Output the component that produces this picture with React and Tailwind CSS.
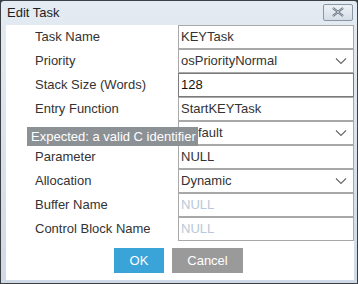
import React from "react";

const Chevron = () => (
  <svg width="12" height="8" viewBox="0 0 12 8" className="mr-[6px]">
    <path d="M1 1.5 L6 6.5 L11 1.5" fill="none" stroke="#666" strokeWidth="1.1" />
  </svg>
);

const rows = [
  { label: "Task Name", value: "KEYTask" },
  { label: "Priority", value: "osPriorityNormal", select: true },
  { label: "Stack Size (Words)", value: "128", focus: true },
  { label: "Entry Function", value: "StartKEYTask" },
  { label: "", value: "fault", select: true, hidden: true },
  { label: "Parameter", value: "NULL" },
  { label: "Allocation", value: "Dynamic", select: true },
  { label: "Buffer Name", value: "NULL", placeholder: true },
  { label: "Control Block Name", value: "NULL", placeholder: true },
];

export default function App() {
  return (
    <div
      className="relative w-[358px] h-[284px] bg-[#3c3f44] p-px overflow-hidden"
      style={{ fontFamily: '"Liberation Sans", Arial, sans-serif' }}
    >
      <div className="flex flex-col w-full h-full bg-gradient-to-b from-[#e4ebf2] to-[#cfdae6] rounded-t-[3px]">
        <div className="flex items-center justify-between h-[24px] pl-[6px] pr-[4px]">
          <span className="text-[13px] text-[#1e1e1e]">Edit Task</span>
          <div className="flex items-center justify-center w-[30px] h-[17px] mt-[-2px] border border-[#8a96a4] rounded-[2px] bg-gradient-to-b from-[#eef2f6] to-[#d4dde6]">
            <svg width="14" height="10" viewBox="0 0 14 10">
              <path d="M2 1 L12 9 M12 1 L2 9" stroke="#4a5563" strokeWidth="2.2" />
              <path d="M2 1 L12 9 M12 1 L2 9" stroke="#e8edf2" strokeWidth="0.8" />
            </svg>
          </div>
        </div>
        <div className="flex-1 ml-[5px] mr-[3px] mb-[3px] bg-white flex flex-col">
          <div className="flex flex-col">
            {rows.map((r, i) => (
              <div key={i} className="flex h-[24px]">
                <div className="w-[172px] pl-[29px] flex items-center text-[13px] text-[#333]">
                  {r.label}
                </div>
                <div
                  className={
                    "flex-1 flex items-center justify-between text-[13px] border " +
                    (r.hidden ? "pl-[19px] " : "pl-[2px] ") +
                    (r.focus ? "border-[#7a7a7a] text-[#111]" : "border-[#a8a8a8] text-[#333]")
                  }
                >
                  <span className={r.placeholder ? "text-[#b8c8d8]" : ""}>{r.value}</span>
                  {r.select && <Chevron />}
                </div>
              </div>
            ))}
          </div>
          <div className="flex gap-[8px] ml-[108px] mt-[7px]">
            <div className="w-[50px] h-[25px] bg-[#3aa4d9] text-white text-[13px] flex items-center justify-center">
              OK
            </div>
            <div className="w-[71px] h-[25px] bg-[#9a9a9a] text-white text-[13px] flex items-center justify-center">
              Cancel
            </div>
          </div>
        </div>
      </div>
      <div className="absolute left-[27px] top-[127px] h-[19px] w-[171px] bg-[#8c9196] text-white text-[13px] flex items-center pl-[4px]">
        Expected: a valid C identifier
      </div>
    </div>
  );
}
